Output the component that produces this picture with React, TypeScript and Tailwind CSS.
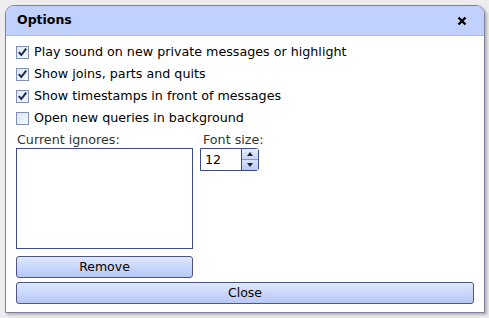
import React from 'react';

function Check({ checked }: { checked: boolean }) {
  return (
    <span className="w-[13px] h-[13px] border border-[#7f8fb8] bg-gradient-to-br from-[#dfe6f6] to-[#f4f7fd] flex items-center justify-center shrink-0">
      {checked && (
        <svg width="11" height="11" viewBox="0 0 11 11">
          <path d="M1.8 5.2 L4.3 8 L9.2 1.6" fill="none" stroke="#1c2a4a" strokeWidth="2" />
        </svg>
      )}
    </span>
  );
}

const options = [
  { label: 'Play sound on new private messages or highlight', checked: true },
  { label: 'Show joins, parts and quits', checked: true },
  { label: 'Show timestamps in front of messages', checked: true },
  { label: 'Open new queries in background', checked: false },
];

const btn =
  'h-[22px] border border-[#4e5680] rounded-[3px] bg-gradient-to-b from-[#dde8ff] to-[#b7c7f6] text-[12.5px] text-black flex items-center justify-center';

export default function App() {
  return (
    <div
      className="w-[489px] h-[318px] bg-[#ededed] pl-[5px] pt-[5px] overflow-hidden"
      style={{ fontFamily: '"DejaVu Sans", Verdana, sans-serif' }}
    >
      <div className="w-[480px] h-[308px] border border-[#80809c] rounded-t-[9px] bg-white flex flex-col shadow-[2px_2px_3px_rgba(0,0,0,0.25)] overflow-hidden">
        <div className="h-[30px] shrink-0 bg-[#c1d1fd] border-b border-[#a9b9ea] flex items-center justify-between pl-[11px] pr-[17px]">
          <span className="text-[12.5px] font-bold text-black">Options</span>
          <svg width="10" height="10" viewBox="0 0 10 10">
            <path d="M1.5 1.5 L8.5 8.5 M8.5 1.5 L1.5 8.5" stroke="#000" strokeWidth="2.4" />
          </svg>
        </div>
        <div className="flex flex-col pl-[10px] pr-[10px] pt-[5px] text-[12.7px] text-black">
          {options.map((o) => (
            <div key={o.label} className="h-[22px] flex items-center gap-[5px]">
              <Check checked={o.checked} />
              <span className="leading-none">{o.label}</span>
            </div>
          ))}
          <div className="flex gap-[7px] mt-[1px]">
            <div className="w-[177px] flex flex-col">
              <span className="pl-[1px] h-[18px] text-[#333]">Current ignores:</span>
              <div className="w-[177px] h-[101px] border border-[#3d4b8c] bg-white" />
              <button className={`${btn} mt-[7px] w-[177px]`}>Remove</button>
            </div>
            <div className="flex flex-col">
              <span className="pl-[3px] h-[18px] text-[#333]">Font size:</span>
              <div className="flex w-[59px] h-[23px] border border-[#3d4b8c] rounded-r-[3px]">
                <div className="w-[40px] flex items-center pl-[4px] bg-white">12</div>
                <div className="flex-1 flex flex-col border-l border-[#3d4b8c]">
                  <div className="flex-1 bg-gradient-to-b from-[#e4ecff] to-[#c8d5fa] border-b border-[#8a98c8] flex items-center justify-center">
                    <svg width="6" height="4" viewBox="0 0 6 4"><path d="M0 4 L3 0 L6 4 Z" fill="#222" /></svg>
                  </div>
                  <div className="flex-1 bg-gradient-to-b from-[#d8e2fd] to-[#b9c8f6] flex items-center justify-center">
                    <svg width="6" height="4" viewBox="0 0 6 4"><path d="M0 0 L3 4 L6 0 Z" fill="#222" /></svg>
                  </div>
                </div>
              </div>
            </div>
          </div>
          <button className={`${btn} mt-[4px] w-[458px]`}>Close</button>
        </div>
      </div>
    </div>
  );
}
